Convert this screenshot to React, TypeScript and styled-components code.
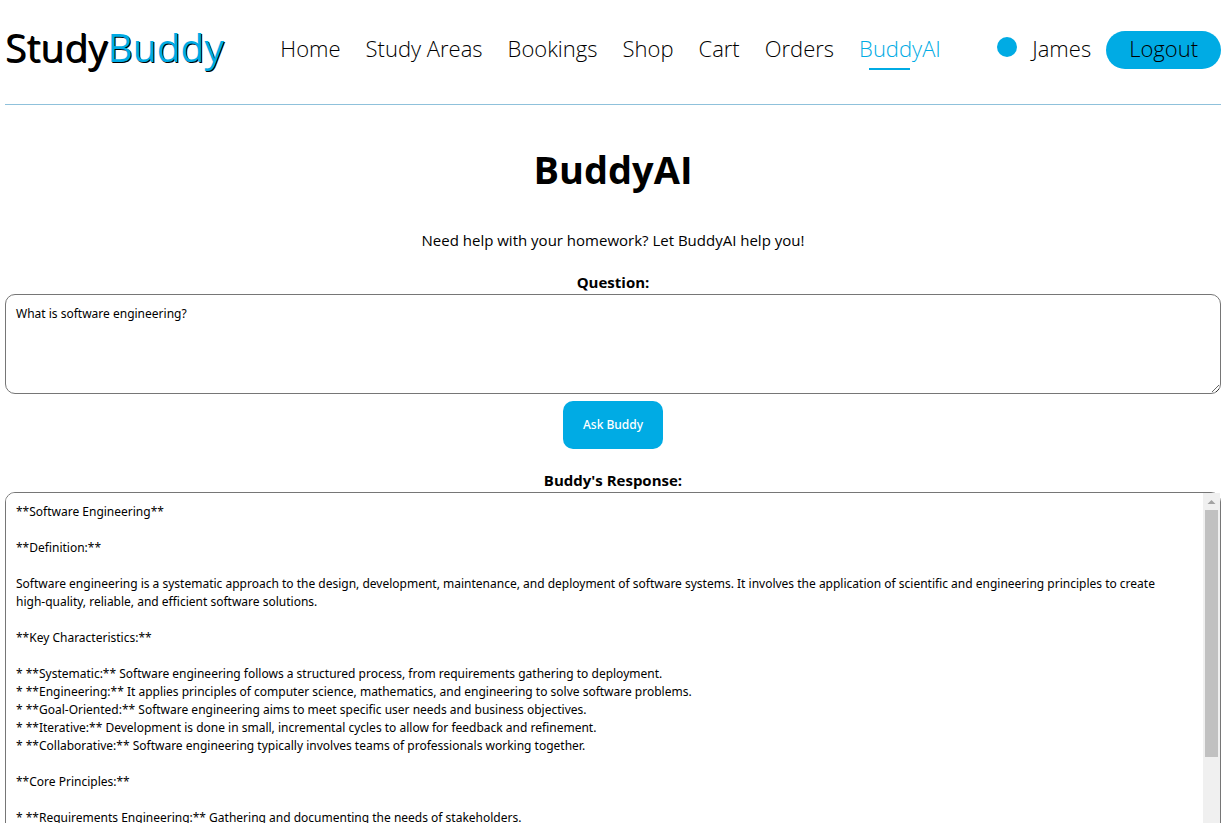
import React, { useEffect, useRef, useState } from "react";
import styled, { createGlobalStyle } from "styled-components";

const accent = "#00abe4";

const GlobalStyle = createGlobalStyle`
  *, *::before, *::after { box-sizing: border-box; }
  html { scrollbar-width: none; }
  body {
    margin: 0;
    background: #fff;
    color: #000;
    font-family: "Open Sans", "Noto Sans", sans-serif;
    font-size: 15px;
  }
`;

const Page = styled.div`
  padding: 0 7px 24px 5px;
`;

const Header = styled.header`
  display: flex;
  align-items: center;
  justify-content: space-between;
  padding: 31px 0 35px;
  border-bottom: 1px solid #8fc1db;
`;

const Logo = styled.a`
  height: 38px;
  color: #000;
  font-size: 39px;
  line-height: 32px;
  text-decoration: none;
  text-shadow: 1px 1px 0 #000;
`;

const LogoAccent = styled.span`
  color: ${accent};
`;

const Nav = styled.nav`
  display: flex;
  gap: 25px;
`;

const NavLink = styled.a<{ $active?: boolean }>`
  position: relative;
  height: 38px;
  color: ${({ $active }) => ($active ? accent : "#000")};
  font-size: 22px;
  font-weight: 300;
  line-height: 34px;
  text-decoration: none;

  &::after {
    content: "";
    display: ${({ $active }) => ($active ? "block" : "none")};
    position: absolute;
    left: 10px;
    bottom: -1px;
    width: 50%;
    height: 2px;
    background: ${accent};
  }
`;

const User = styled.div`
  display: flex;
  gap: 15px;
  height: 38px;
  font-size: 22px;
  font-weight: 300;
  line-height: 34px;
`;

const Avatar = styled.span`
  width: 20px;
  height: 20px;
  margin-top: 6px;
  border-radius: 50%;
  background: ${accent};
`;

const LogoutButton = styled.button`
  height: 38px;
  padding: 0 23px 4px;
  border: 0;
  border-radius: 19px;
  background: ${accent};
  color: #000;
  font: inherit;
  cursor: pointer;
`;

const Main = styled.main`
  display: flex;
  flex-direction: column;
  align-items: center;
`;

const Title = styled.h1`
  margin: 32px 0 26px;
  font-size: 38px;
  font-weight: 700;
  line-height: 64px;
`;

const Intro = styled.p`
  margin: 0 0 17px;
  line-height: 26px;
`;

const Form = styled.form`
  display: flex;
  flex-direction: column;
  align-items: center;
  width: 100%;
`;

const Label = styled.label`
  font-weight: 700;
  line-height: 24px;
`;

const TextBox = styled.textarea<{ $height: number }>`
  display: block;
  width: 100%;
  height: ${({ $height }) => $height}px;
  padding: 10px;
  border: 1px solid #767676;
  border-radius: 10px;
  background: #fff;
  color: #000;
  font-family: "Noto Sans", sans-serif;
  font-size: 12px;
  line-height: 18px;
  outline: none;
`;

const ResponseFrame = styled.div`
  position: relative;
  width: 100%;
`;

const ResponseBox = styled(TextBox)`
  padding-right: 36px;
  resize: none;
  scrollbar-width: none;
`;

const ScrollBar = styled.div`
  position: absolute;
  top: 1px;
  right: 1px;
  bottom: 1px;
  display: flex;
  flex-direction: column;
  width: 17px;
  background: #f0f0f0;
`;

const ScrollArrow = styled.svg`
  display: block;
  width: 17px;
  height: 17px;
`;

const ScrollTrack = styled.div`
  flex: 1;
  padding: 0 2px;
`;

const ScrollThumb = styled.div`
  background: #c1c1c1;
`;

const AskButton = styled.button`
  margin: 7px 0 19px;
  padding: 0 20px;
  border: 0;
  border-radius: 10px;
  background: ${accent};
  color: #fff;
  font-family: "Noto Sans", sans-serif;
  font-size: 12px;
  font-weight: 500;
  line-height: 48px;
  cursor: pointer;
`;

const links = ["Home", "Study Areas", "Bookings", "Shop", "Cart", "Orders", "BuddyAI"];

const answer = `**Software Engineering**

**Definition:**

Software engineering is a systematic approach to the design, development, maintenance, and deployment of software systems. It involves the application of scientific and engineering principles to create high-quality, reliable, and efficient software solutions.

**Key Characteristics:**

* **Systematic:** Software engineering follows a structured process, from requirements gathering to deployment.
* **Engineering:** It applies principles of computer science, mathematics, and engineering to solve software problems.
* **Goal-Oriented:** Software engineering aims to meet specific user needs and business objectives.
* **Iterative:** Development is done in small, incremental cycles to allow for feedback and refinement.
* **Collaborative:** Software engineering typically involves teams of professionals working together.

**Core Principles:**

* **Requirements Engineering:** Gathering and documenting the needs of stakeholders.
* **Design:** Creating a blueprint for the software system.
* **Implementation:** Writing the code for the software.
* **Testing:** Verifying that the software meets its requirements.
* **Deployment:** Releasing the software to its users.
* **Maintenance:** Updating and improving the software over time.

**Benefits:**

* **Improved Quality:** Structured processes reduce the number of defects.
* **Increased Productivity:** Shared methods and tools speed up development.
* **Reduced Costs:** Early planning avoids expensive rework.
* **Enhanced Reliability:** Thorough testing leads to dependable systems.
* **Better Communication:** Clear documentation keeps everyone informed.

**Roles:**

* **Software Engineer:** Designs, builds, and maintains software.
* **Software Architect:** Defines the overall structure of the system.
* **Test Engineer:** Plans and carries out software tests.
* **Project Manager:** Coordinates people, budget, and schedule.

**Tools:**

* Version control systems
* Integrated development environments
* Automated testing frameworks
* Continuous integration servers
* Code review platforms
* Issue trackers

**Conclusion:**

Software engineering brings discipline and structure to the creation of software.`;

function Response({ text }: { text: string }) {
  const box = useRef<HTMLTextAreaElement>(null);
  const [thumb, setThumb] = useState({ size: 100, offset: 0 });

  const measure = () => {
    const el = box.current;
    if (!el) return;
    const track = el.clientHeight - 34;
    setThumb({
      size: Math.ceil((track * el.clientHeight) / el.scrollHeight),
      offset: Math.round((track * el.scrollTop) / el.scrollHeight),
    });
  };

  useEffect(() => {
    measure();
    window.addEventListener("resize", measure);
    return () => window.removeEventListener("resize", measure);
  }, [text]);

  return (
    <ResponseFrame>
      <ResponseBox id="response" ref={box} $height={500} readOnly value={text} onScroll={measure} />
      <ScrollBar aria-hidden="true">
        <ScrollArrow viewBox="0 0 17 17">
          <path d="M4.5 11 8.5 7 12.5 11Z" fill="#a3a3a3" />
        </ScrollArrow>
        <ScrollTrack>
          <ScrollThumb style={{ height: thumb.size, marginTop: thumb.offset }} />
        </ScrollTrack>
        <ScrollArrow viewBox="0 0 17 17">
          <path d="M4.5 6 8.5 10 12.5 6Z" fill="#505050" />
        </ScrollArrow>
      </ScrollBar>
    </ResponseFrame>
  );
}

export default function App() {
  const [question, setQuestion] = useState("What is software engineering?");
  return (
    <>
      <GlobalStyle />
      <Page>
        <Header>
          <Logo href="#">
            Study<LogoAccent>Buddy</LogoAccent>
          </Logo>
          <Nav>
            {links.map((name) => (
              <NavLink key={name} href="#" $active={name === "BuddyAI"}>
                {name}
              </NavLink>
            ))}
          </Nav>
          <User>
            <Avatar />
            <span>James</span>
            <LogoutButton type="button">Logout</LogoutButton>
          </User>
        </Header>
        <Main>
          <Title>BuddyAI</Title>
          <Intro>Need help with your homework? Let BuddyAI help you!</Intro>
          <Form onSubmit={(e) => e.preventDefault()}>
            <Label htmlFor="question">Question:</Label>
            <TextBox
              id="question"
              $height={100}
              value={question}
              onChange={(e) => setQuestion(e.target.value)}
            />
            <AskButton type="submit">Ask Buddy</AskButton>
            <Label htmlFor="response">Buddy's Response:</Label>
            <Response text={answer} />
          </Form>
        </Main>
      </Page>
    </>
  );
}
